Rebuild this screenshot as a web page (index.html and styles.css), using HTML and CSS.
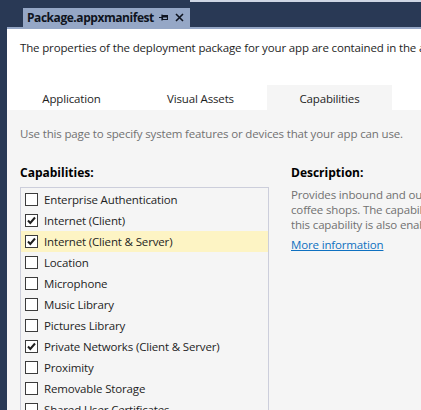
FILE: index.html
```html
<!DOCTYPE html>
<html>
<head>
<meta charset="utf-8">
<link rel="stylesheet" href="styles.css">
</head>
<body>
<div class="frame">
  <div class="doc-tabs">
    <div class="doc-tab">
      <span class="doc-title">Package.appxmanifest</span>
      <svg class="pin" width="9" height="9" viewBox="0 0 9 9"><path d="M0 4.5H3M3 1.5V7.5M3.5 2.5H8.5V6.5H3.5Z" fill="none" stroke="#0f1420" stroke-width="1.2"/><path d="M4 3H8V4.5H4Z" fill="#0f1420"/></svg>
      <svg class="close" width="9" height="9" viewBox="0 0 9 9"><path d="M1 1L8 8M8 1L1 8" stroke="#0f1420" stroke-width="1.6"/></svg>
    </div>
  </div>
  <div class="doc-body">
    <div class="header">
      <p class="intro">The properties of the deployment package for your app are contained in the app manifest file.</p>
      <div class="tabs">
        <div class="tab">Application</div>
        <div class="tab">Visual Assets</div>
        <div class="tab selected">Capabilities</div>
      </div>
    </div>
    <div class="panel">
      <p class="hint">Use this page to specify system features or devices that your app can use.</p>
      <div class="columns">
        <div class="caps">
          <h3 class="heading">Capabilities:</h3>
          <div class="list">
            <div class="row"><span class="box"></span>Enterprise Authentication</div>
            <div class="row"><span class="box"><svg viewBox="0 0 11 11" width="11" height="11"><path d="M2 5.5L4.3 8L9 2.5" fill="none" stroke="#1e1e1e" stroke-width="2"/></svg></span>Internet (Client)</div>
            <div class="row active"><span class="box"><svg viewBox="0 0 11 11" width="11" height="11"><path d="M2 5.5L4.3 8L9 2.5" fill="none" stroke="#1e1e1e" stroke-width="2"/></svg></span>Internet (Client &amp; Server)</div>
            <div class="row"><span class="box"></span>Location</div>
            <div class="row"><span class="box"></span>Microphone</div>
            <div class="row"><span class="box"></span>Music Library</div>
            <div class="row"><span class="box"></span>Pictures Library</div>
            <div class="row"><span class="box"><svg viewBox="0 0 11 11" width="11" height="11"><path d="M2 5.5L4.3 8L9 2.5" fill="none" stroke="#1e1e1e" stroke-width="2"/></svg></span>Private Networks (Client &amp; Server)</div>
            <div class="row"><span class="box"></span>Proximity</div>
            <div class="row"><span class="box"></span>Removable Storage</div>
            <div class="row"><span class="box"></span>Shared User Certificates</div>
          </div>
        </div>
        <div class="desc">
          <h3 class="heading">Description:</h3>
          <div class="line">Provides inbound and outbound access to the Internet and public networks in places like airports and</div>
          <div class="line">coffee shops. The capability must be declared if your app uses the Internet. If checked,</div>
          <div class="line">this capability is also enabled.</div>
          <a class="more" href="#">More information</a>
        </div>
      </div>
    </div>
  </div>
</div>
</body>
</html>
```

FILE: styles.css
```css
html, body {
  margin: 0;
  padding: 0;
}
body {
  width: 421px;
  height: 410px;
  overflow: hidden;
  background: #293955;
  font-family: "Open Sans", "Noto Sans", sans-serif;
  font-size: 11.5px;
  letter-spacing: -0.15px;
  color: #1e1e1e;
}
.frame {
  width: 421px;
  height: 410px;
  display: flex;
  flex-direction: column;
}
.doc-tabs {
  height: 27px;
  flex: none;
  display: flex;
  align-items: flex-end;
  padding-left: 23px;
  box-sizing: border-box;
  background: linear-gradient(to right, transparent 190px, #cfd6e4 190px) top / 100% 2px no-repeat, #293955;
}
.doc-tab {
  height: 19px;
  width: 167px;
  box-sizing: border-box;
  background: #95a7c6;
  display: flex;
  align-items: center;
  padding-left: 4px;
}
.doc-title {
  font-size: 12px;
  font-weight: bold;
  color: #0f1420;
  letter-spacing: -0.45px;
  width: 131px;
}
.pin {
  margin-left: 1px;
}
.close {
  margin-left: 7px;
}
.doc-body {
  margin-left: 7px;
  flex: 1;
  border-top: 2px solid #95a7c6;
  background: #ffffff;
  display: flex;
  flex-direction: column;
  overflow: hidden;
}
.header {
  background: #ffffff;
}
.intro {
  margin: 0;
  padding: 11px 0 0 13px;
  line-height: 16px;
  white-space: nowrap;
}
.tabs {
  display: flex;
  gap: 4px;
  margin: 29px 0 0 2px;
}
.tab {
  width: 125px;
  height: 25px;
  box-sizing: border-box;
  padding-top: 6px;
  text-align: center;
  line-height: 16px;
  background: #ffffff;
}
.tab.selected {
  background: #f5f5f5;
}
.panel {
  flex: 1;
  background: #f5f5f5;
  padding: 16px 0 0 13px;
}
.hint {
  margin: 0;
  line-height: 16px;
  color: #717171;
  white-space: nowrap;
}
.columns {
  display: flex;
  gap: 22px;
  margin-top: 23px;
}
.heading {
  margin: 0 0 6px;
  font-size: 12px;
  font-weight: bold;
  line-height: 16px;
  letter-spacing: 0;
  color: #000000;
}
.caps {
  width: 249px;
  flex: none;
}
.list {
  border: 1px solid #cccedb;
  background: #f5f5f5;
}
.row {
  height: 21px;
  display: flex;
  align-items: center;
  padding-left: 4px;
  white-space: nowrap;
}
.row:first-child {
  padding-top: 1px;
}
.row.active {
  background: #fdf4c4;
}
.box {
  width: 13px;
  height: 13px;
  flex: none;
  box-sizing: border-box;
  border: 1px solid #3c3c3c;
  background: #ffffff;
  margin-right: 6px;
  display: flex;
  align-items: center;
  justify-content: center;
}
.box svg {
  display: block;
}
.desc {
  flex: 1;
  min-width: 0;
  overflow: hidden;
}
.line {
  white-space: nowrap;
  line-height: 15px;
  color: #717171;
}
.more {
  display: inline-block;
  margin-top: 5px;
  color: #0e70c0;
  text-decoration: underline;
  line-height: 15px;
}
```
